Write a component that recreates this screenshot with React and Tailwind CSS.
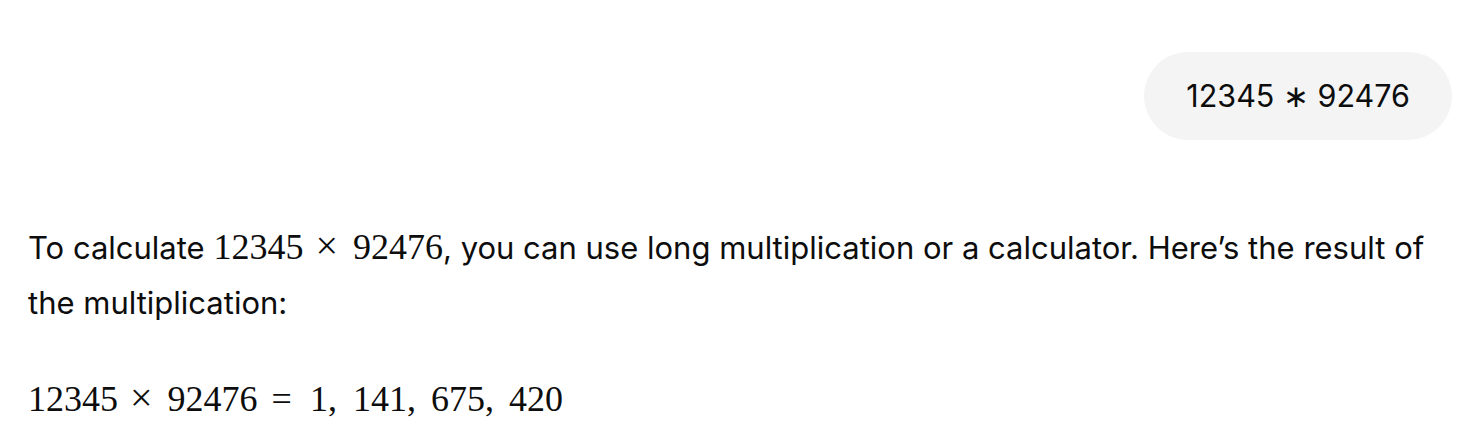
function Mul({ a, b }) {
  return (
    <span className="font-['Liberation_Serif',serif] text-[36px] whitespace-nowrap">
      <span>{a}</span>
      <span className="inline-block ml-[12px] mr-[15px] text-[40px] leading-none">×</span>
      <span>{b}</span>
    </span>
  );
}

export default function App() {
  return (
    <div className="min-h-screen bg-white text-[#0d0d0d]">
      <div className="w-[1424px] ml-[28px] pt-[52px] font-['Inter','Noto_Sans',sans-serif]">
        <div className="flex justify-end">
          <div className="rounded-[44px] bg-[#f4f4f4] h-[88px] px-[42px] flex items-center text-[30.5px]">
            12345 ∗ 92476
          </div>
        </div>
        <div className="mt-[80px] text-[31px] leading-[55px]">
          <p>
            To calculate <Mul a="12345" b="92476" />, you can use long multiplication or a calculator. Here’s the
            result of the multiplication:
          </p>
          <p className="mt-[42px] font-['Liberation_Serif',serif] text-[36px] whitespace-nowrap">
            <Mul a="12345" b="92476" />
            <span className="inline-block ml-[14px] mr-[18px]">=</span>
            <span>1,</span>
            <span className="ml-[16px]">141,</span>
            <span className="ml-[15px]">675,</span>
            <span className="ml-[15px]">420</span>
          </p>
        </div>
      </div>
    </div>
  );
}
